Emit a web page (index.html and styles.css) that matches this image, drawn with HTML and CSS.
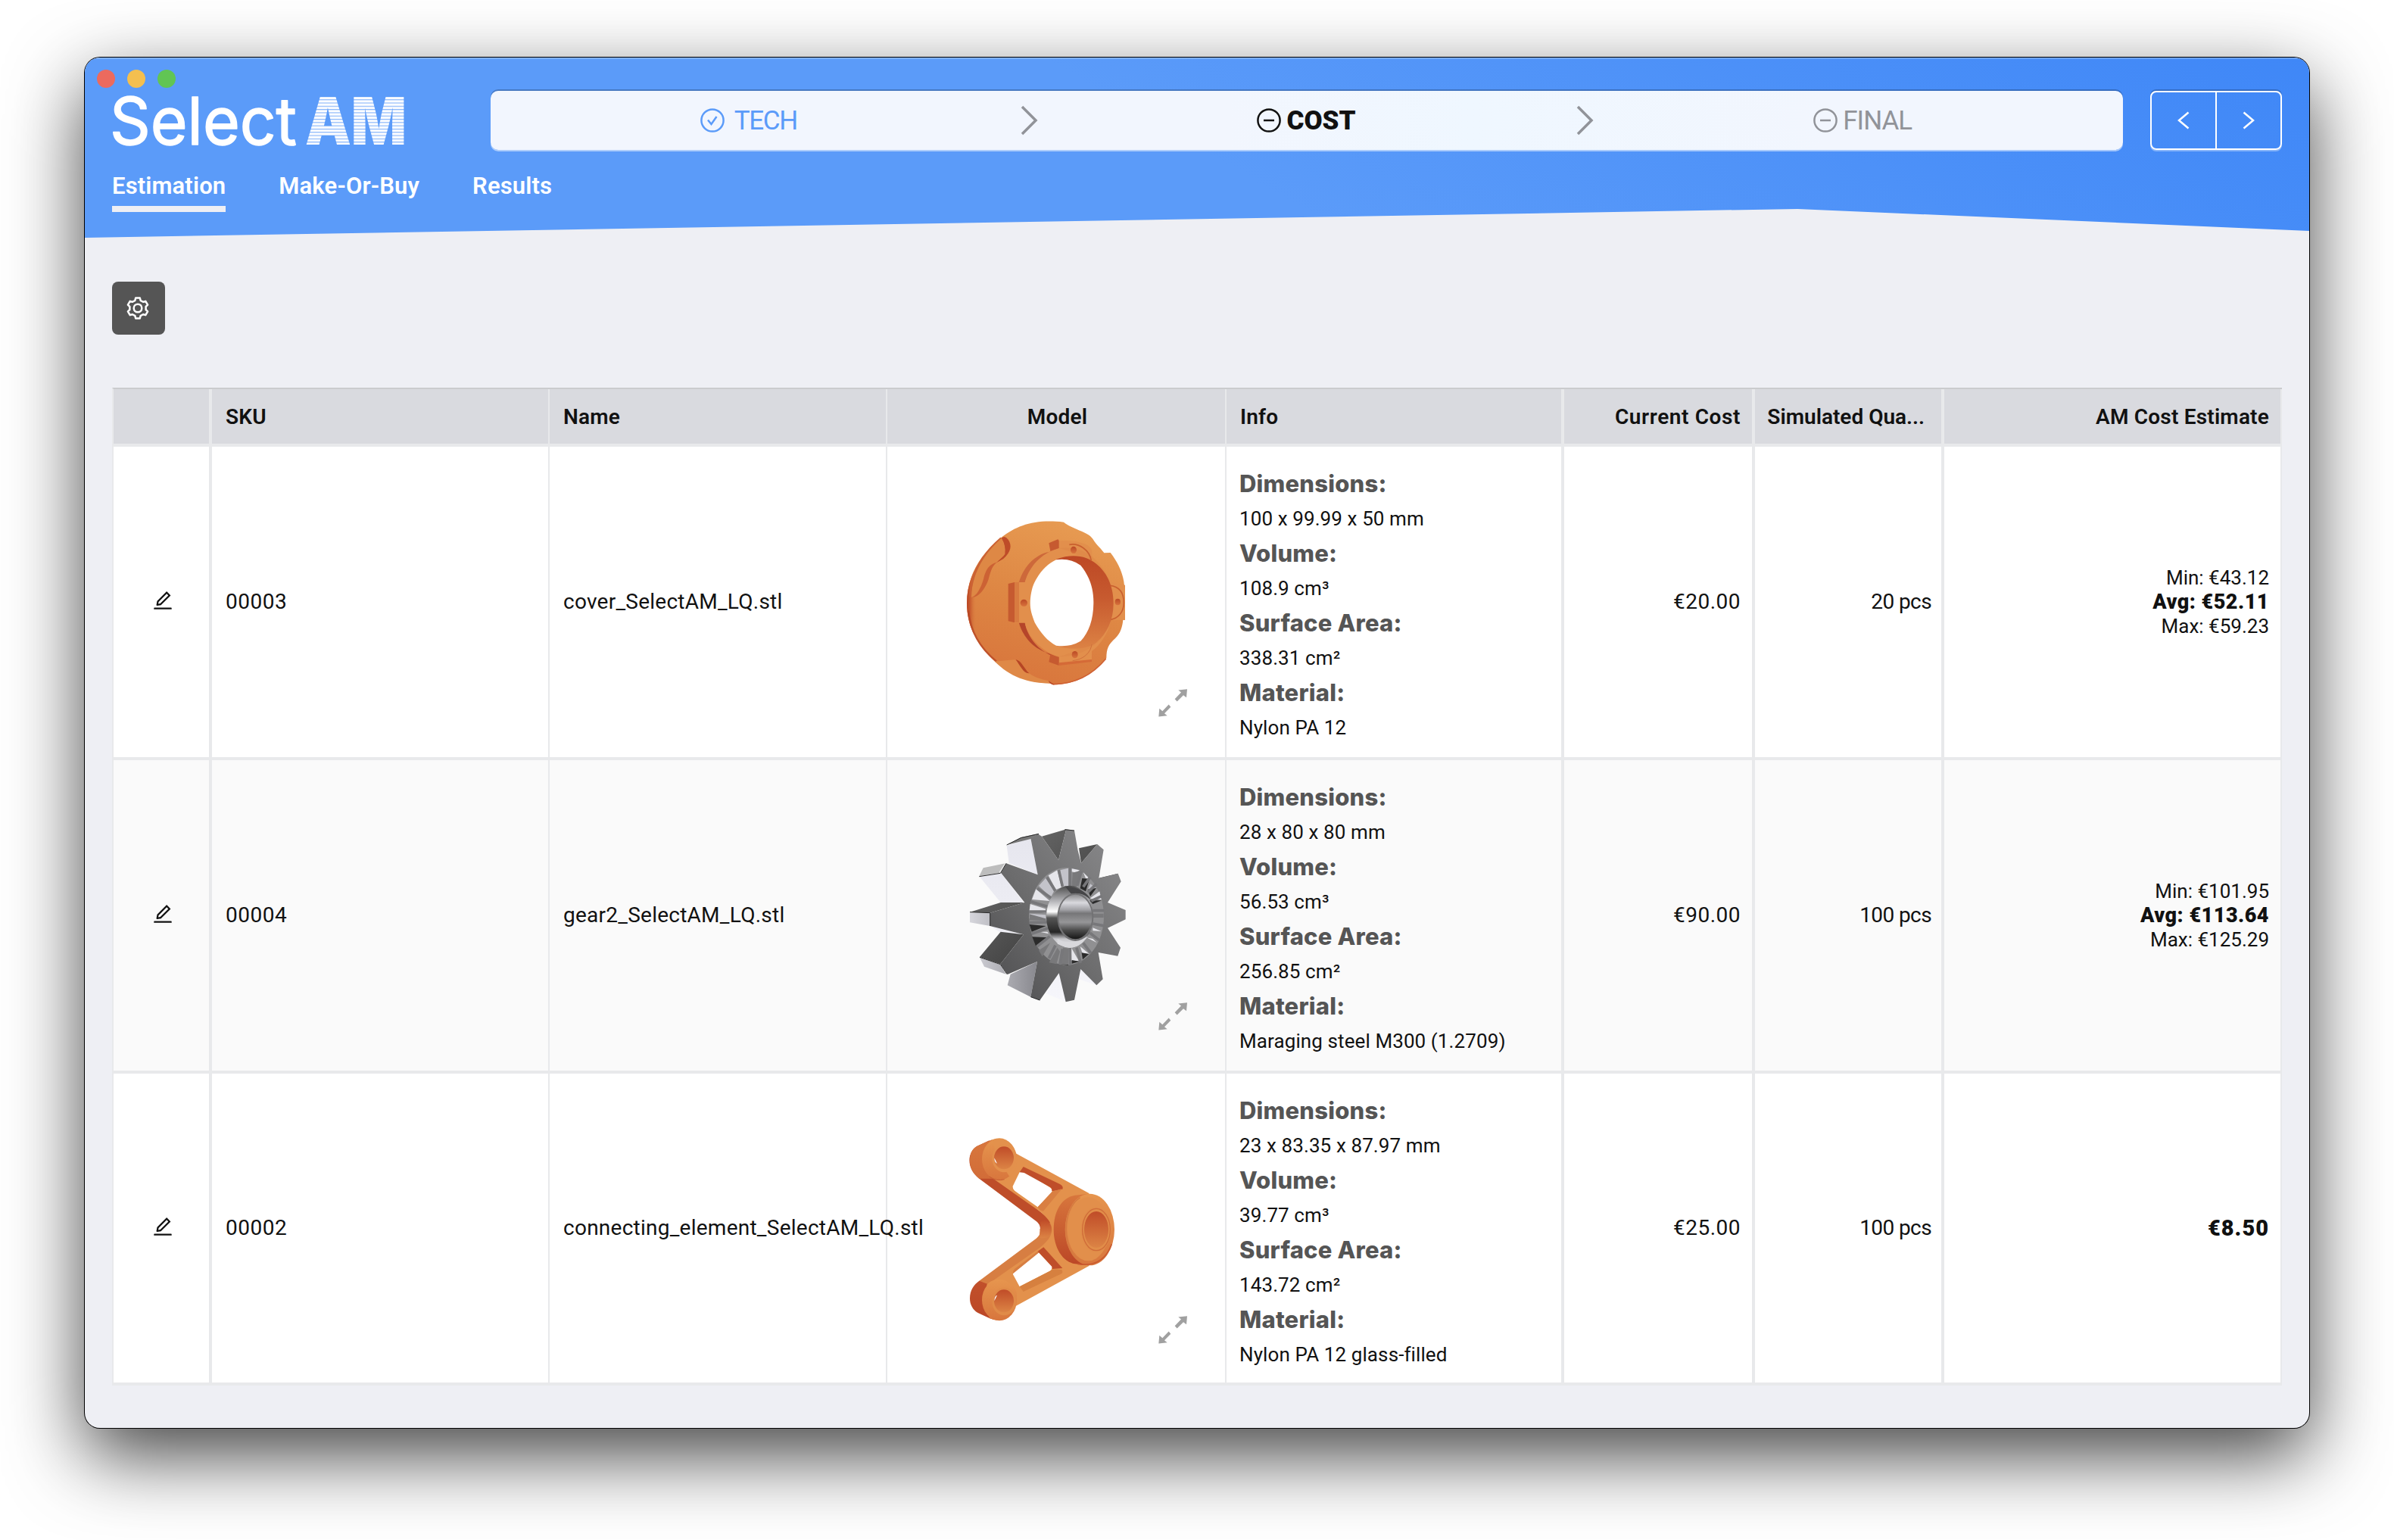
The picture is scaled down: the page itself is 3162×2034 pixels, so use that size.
FILE: index.html
```html
<!DOCTYPE html>
<html lang="en">
<head>
<meta charset="utf-8">
<title>Select AM</title>
<link rel="stylesheet" href="styles.css">
</head>
<body>
<svg class="defs" width="0" height="0" aria-hidden="true">
  <defs>
    <symbol id="edit" viewBox="0 0 1024 1024"><path d="M257.700 752c2 0 4-.2 6-.5L431.900 722c2-.4 3.900-1.300 5.300-2.800l423.900-423.900a9.960 9.960 0 0 0 0-14.100L694.900 114.900c-1.900-1.900-4.400-2.900-7.100-2.900s-5.200 1-7.100 2.900L256.800 538.800c-1.500 1.500-2.400 3.300-2.800 5.300l-29.500 168.200a33.500 33.500 0 0 0 9.400 29.800c6.600 6.400 14.900 9.900 23.800 9.900zm67.400-174.400L687.800 215l73.300 73.300-362.700 362.600-88.900 15.700 15.600-89zM880 836H144c-17.700 0-32 14.300-32 32v36c0 4.400 3.600 8 8 8h784c4.400 0 8-3.600 8-8v-36c0-17.700-14.300-32-32-32z"/></symbol>
    <symbol id="expand" viewBox="0 0 114 110"><path d="M114 0L79 4l11 9-25 26 9 10 25-25 12 9zM1 109l3-32 12 10 25-26 8 10-25 25 11 9z"/></symbol>
    <symbol id="minus" viewBox="0 0 32 32"><circle cx="16" cy="16" r="14.600"/><path d="M9 16h14"/></symbol>
  </defs>
</svg>

<div class="window">
  <header class="header">
    <div class="lights"><i class="red"></i><i class="yellow"></i><i class="green"></i></div>
    <div class="topbar">
      <svg class="logo" width="500" height="78" viewBox="0 0 500 78">
        <defs>
          <pattern id="stripes" width="10" height="4.300" patternUnits="userSpaceOnUse"><rect width="10" height="4.300" fill="#fff"/><rect width="10" height="1.300" y="2.500" fill="#8fbafb"/></pattern>
        </defs>
        <text class="logo-select" x="-3" y="70.500" textLength="247" lengthAdjust="spacingAndGlyphs">Select</text>
        <text class="logo-am" x="255" y="70.500" textLength="134" lengthAdjust="spacingAndGlyphs" fill="url(#stripes)">AM</text>
      </svg>
      <nav class="steps">
        <div class="step done"><svg class="step-icon" viewBox="0 0 32 32"><circle cx="16" cy="16" r="14.600"/><path d="M10 15.500l4.500 5.500L21.500 11"/></svg><span>TECH</span></div>
        <svg class="sep" viewBox="0 0 24 40"><path d="M2 2l18 18L2 38"/></svg>
        <div class="step active-step"><svg class="step-icon"><use href="#minus"/></svg><span>COST</span></div>
        <svg class="sep" viewBox="0 0 24 40"><path d="M2 2l18 18L2 38"/></svg>
        <div class="step next"><svg class="step-icon"><use href="#minus"/></svg><span>FINAL</span></div>
      </nav>
      <div class="pager">
        <button><svg viewBox="0 0 16 24"><path d="M14.500 1.500L2 12l12.500 10.500"/></svg></button>
        <button><svg viewBox="0 0 16 24"><path d="M1.500 1.500L14 12 1.500 22.500"/></svg></button>
      </div>
    </div>
    <nav class="tabs"><a class="active">Estimation</a><a>Make-Or-Buy</a><a>Results</a></nav>
  </header>

  <main class="content">
    <button class="settings"><svg viewBox="-16 -16 32 32"><path d="M-3.600-10.200L-2.800-13.500H2.800L3.600-10.200 7.030-8.220 10.290-9.170 13.090-4.330 10.630-1.980V1.980L13.090 4.330 10.290 9.170 7.030 8.220 3.600 10.200 2.800 13.500H-2.800L-3.600 10.200-7.030 8.220-10.290 9.170-13.090 4.330-10.630 1.980V-1.980L-13.090-4.330-10.290-9.170-7.030-8.220z"/><circle r="5.300"/></svg></button>

    <div class="table">
      <div class="row head">
        <div></div><div>SKU</div><div>Name</div><div class="center">Model</div><div>Info</div><div class="num wide">Current Cost</div><div class="num clipped">Simulated Qua...</div><div class="num">AM Cost Estimate</div>
      </div>

      <div class="row">
        <div class="center"><svg class="edit"><use href="#edit"/></svg></div>
        <div>00003</div>
        <div class="name">cover_SelectAM_LQ.stl</div>
        <div class="model">
          <svg class="part" viewBox="-204 -210 1338 1230">
            <defs>
              <linearGradient id="cBody" x1=".65" y1="0" x2=".35" y2="1"><stop offset="0" stop-color="#e79b52"/><stop offset=".5" stop-color="#de8744"/><stop offset="1" stop-color="#d8753c"/></linearGradient>
              <linearGradient id="cEdge" x1="0" y1="0" x2="1" y2="0"><stop offset="0" stop-color="#b94422"/><stop offset=".07" stop-color="#cb6032"/><stop offset=".16" stop-color="#d87a3e" stop-opacity="0"/></linearGradient>
              <linearGradient id="cBore" x1="0" y1="0" x2="0" y2="1"><stop offset="0" stop-color="#bd4825"/><stop offset=".45" stop-color="#c75a2f"/><stop offset="1" stop-color="#dc8244"/></linearGradient>
              <linearGradient id="cHole" x1="0" y1="0" x2="0" y2="1"><stop offset="0" stop-color="#bb4a26"/><stop offset="1" stop-color="#d8733c"/></linearGradient>
            </defs>
            <path fill="url(#cBody)" d="M111 410C111 320 150 225 250 148C310 102 380 76 495 89C530 118 590 125 610 155C625 180 645 195 655 211L680 210C715 255 732 300 735 340H738V476H730C728 500 720 530 700 548C670 575 665 590 664 627C610 695 540 733 453 733L434 726C350 726 280 690 222 641C150 575 111 500 111 410z"/>
            <path fill="url(#cEdge)" d="M111 410C111 320 150 225 250 148C330 200 190 560 330 640C270 640 240 635 222 641C150 575 111 500 111 410z"/>
            <path fill="none" stroke="#b64424" stroke-width="7" opacity=".75" d="M117 440C125 520 165 590 228 640"/>
            <path fill="none" stroke="#cf6134" stroke-width="5" d="M662 630C610 693 540 730 453 731"/>
            <path fill="#be4c28" d="M248 152Q262 140 275 158C290 180 288 205 255 235L228 250 262 215Q266 180 248 152z"/>
            <path fill="#de8845" d="M129 387C128 310 170 220 248 153Q264 185 260 218C235 250 200 250 188 290C175 330 150 385 129 387z"/>
            <path fill="#cc6234" d="M129 387C150 383 166 350 176 318C188 270 200 258 232 247C212 260 205 285 196 318C184 350 160 388 129 387z"/>
            <path fill="#cb6234" d="M129 387C128 310 170 220 248 153L244 149C150 230 115 320 122 388z"/>
            <path fill="#df8947" d="M222 641L304 633C325 650 345 690 358 688C380 705 410 712 434 718L440 728C350 726 280 700 222 641z"/>
            <path fill="#b64524" d="M304 633C328 637 338 670 358 688C335 690 322 655 304 633zM434 717L458 733H450L439 725z"/>
            <path fill="#cd683a" d="M317 328C340 255 390 215 437 207L476 188V200C410 220 360 260 341 328z"/>
            <path fill="#b5452a" d="M317 486C335 550 380 592 437 610L476 627C400 610 350 545 341 486z"/>
            <path fill="#e28f4c" d="M472 162C550 160 600 175 606 200L608 243 690 330 738 338V476H682C672 530 640 575 606 600V640L476 654V622C410 605 350 540 341 488H298V327H341C360 260 410 210 476 192z"/>
            <path fill="#c65a30" d="M436 172L472 157 476 162V191L442 204zM275 333L300 327V487L275 481zM442 613L476 624V657L436 643z"/>
            <path fill="#d87b40" d="M300 327H318V487H300z"/>
            <path fill="#d56a37" d="M476 646L606 633V642L476 657z"/>
            <path fill="#d87a40" opacity=".25" d="M476 192C600 175 690 280 690 410S600 620 476 622C600 590 665 500 665 410S600 220 476 192z"/>
            <path fill="url(#cBore)" d="M465 236C530 212 585 222 625 255C668 290 692 345 692 410C692 480 665 530 625 565C585 598 510 595 465 579z"/>
            <path fill="#fff" d="M465 238Q520 230 562 260C595 300 614 350 613 410C612 475 595 525 562 560Q520 585 465 578C430 560 405 530 380 487C368 455 362 435 362 410S368 350 378 330C400 285 430 255 465 238z"/>
            <path fill="none" stroke="#c9602f" stroke-width="5" d="M517 178C555 170 598 200 604 242M680 340C715 345 733 370 733 408S710 470 682 475"/>
            <path fill="none" stroke="#d0713c" stroke-width="3" d="M606 573C602 605 575 633 530 638"/>
            <g fill="url(#cHole)"><circle cx="337" cy="409" r="14"/><ellipse cx="534" cy="199" rx="12" ry="14"/><ellipse cx="539" cy="614" rx="12" ry="14"/><ellipse cx="709" cy="405" rx="11" ry="13"/></g>
          </svg>
          <svg class="expand"><use href="#expand"/></svg>
        </div>
        <div class="info"><b>Dimensions:</b><span>100 x 99.99 x 50 mm</span><b>Volume:</b><span>108.9 cm³</span><b>Surface Area:</b><span>338.31 cm²</span><b>Material:</b><span>Nylon PA 12</span></div>
        <div class="num">€20.00</div>
        <div class="num qty">20 pcs</div>
        <div class="num estimate"><span>Min: €43.12</span><b>Avg: €52.11</b><span>Max: €59.23</span></div>
      </div>

      <div class="row alt">
        <div class="center"><svg class="edit"><use href="#edit"/></svg></div>
        <div>00004</div>
        <div class="name">gear2_SelectAM_LQ.stl</div>
        <div class="model">
          <svg class="part" viewBox="-204 -168 1338 1230">
            <defs>
              <linearGradient id="gFace" x1="0" y1="1" x2="1" y2="0"><stop offset="0" stop-color="#4c4c4e"/><stop offset=".45" stop-color="#6c6c6d"/><stop offset="1" stop-color="#8c8c8e"/></linearGradient>
              <linearGradient id="gLight" x1="0" y1="0" x2="0" y2="1"><stop offset="0" stop-color="#e6e6ee"/><stop offset="1" stop-color="#f6f6fb"/></linearGradient>
              <linearGradient id="gDark" x1="0" y1="0" x2="1" y2="1"><stop offset="0" stop-color="#777"/><stop offset="1" stop-color="#2a2a2a"/></linearGradient>
              <linearGradient id="gMid" x1="0" y1="0" x2="1" y2="0"><stop offset="0" stop-color="#d6d6dc"/><stop offset="1" stop-color="#88888e"/></linearGradient>
              <linearGradient id="gBore" x1="0" y1="0" x2="0" y2="1"><stop offset="0" stop-color="#8b8b8d"/><stop offset=".18" stop-color="#d9d9de"/><stop offset=".34" stop-color="#a2a2a6"/><stop offset=".42" stop-color="#767678"/><stop offset=".62" stop-color="#969698"/><stop offset=".8" stop-color="#4c4c4c"/><stop offset="1" stop-color="#161616"/></linearGradient>
              <linearGradient id="gRing" x1="0" y1="0" x2="0" y2="1"><stop offset="0" stop-color="#4b4b4b"/><stop offset=".25" stop-color="#b5b5b9"/><stop offset=".42" stop-color="#fff"/><stop offset=".52" stop-color="#555"/><stop offset=".75" stop-color="#262626"/><stop offset=".86" stop-color="#c8c8cc"/><stop offset="1" stop-color="#e9e9ed"/></linearGradient>
            </defs>
            <path fill="url(#gLight)" d="M269 170L364 142 392 286 278 240zM160 292L246 278 336 396H245zM560 660L650 700 625 724 556 700zM424 756L476 676 503 790zM204 490L330 521 240 512z"/>
            <path fill="#777" d="M269 168L325 138 392 124 364 144z"/>
            <path fill="#bdbdbd" d="M160 292L176 259 264 241 240 279z"/>
            <path fill="url(#gDark)" d="M408 134L505 106 474 228zM555 181L628 165 564 240zM634 299L710 281 660 320zM123 434L245 396 340 396 203 437zM162 612L245 512 336 523 244 640z"/>
            <path fill="url(#gMid)" d="M123 436L203 437V489L123 475zM162 614L244 642 266 680 180 650zM272 724L284 680 390 630 364 770z"/>
            <path fill="url(#gFace)" d="M392 124L408 134 474 228 505 106 537 111 551 190 564 240 628 165 653 187 634 300 710 281 722 313 669 396 740 426V463L669 497 720 575 709 608 632 594 650 700 625 724 562 660 537 782 503 790 476 676 400 784 364 770 390 630 272 681 244 640 336 523 203 489V437L340 396 246 278 267 241 392 286 364 142z"/>
            <path fill="none" stroke="#2b2b2b" stroke-width="3" d="M269 168L325 140 396 124M160 293L244 280 267 241M123 434L203 437V489M162 613L244 641 270 680M499 107L537 111M364 770L400 783"/>
            <path fill="none" stroke="#eee" stroke-width="3" d="M240 276L262 242"/>
            <ellipse cx="506" cy="451" rx="148" ry="193" fill="#909092"/>
            <g fill="#e6e6eb"><path d="M434 289L469 268 486 336 464 345zM527 262L558 268 545 278 527 274zM385 343L369 384 440 390zM362 402L359 428 424 438 422 421zM598 380L644 385 637 352zM572 276L595 300 582 300zM525 575L555 628 526 627zM560 570L596 600 569 597zM400 512L435 520 430 512zM610 540L626 555 585 535zM610 496L644 510 610 508z"/></g>
            <g fill="#c3c3ca"><path d="M396 330L425 298 456 352 444 375zM600 322L622 338 590 345zM480 268L513 260V330L492 332zM359 440L424 445V465L359 460z"/></g>
            <g fill="#2b2b2b"><path d="M568 300L597 303 582 352 560 340zM590 344L624 339 600 372zM598 388L645 388 610 402zM359 483L425 489 368 512zM370 532L436 535 384 568zM566 595L595 600 570 622zM527 624L558 630 527 638zM482 640H513V645z"/></g>
            <g fill="#79797b"><path d="M359 442L424 460V468L359 466zM396 586L442 555 410 610zM610 440H653V456H610zM437 634L470 575 480 590 466 640zM482 640L492 575 515 578 513 643zM527 330L530 278 560 270 545 340z"/></g>
            <g stroke="#77777a" stroke-width="11" fill="none"><path d="M520 259V330M475 267L490 332M428 296L462 350M390 340L445 378M365 393L430 412M358 432H428M359 476L428 474M368 520L432 498M389 570L440 530M436 617L462 566M480 640L490 580M520 645V576M562 635L546 575M602 596L572 556M635 545L598 516M652 488L610 480M654 428H610M646 370L604 390M625 322L590 356M600 295L572 334M565 272L548 330"/></g>
            <ellipse cx="518" cy="452" rx="92" ry="123" fill="url(#gRing)"/>
            <path fill="#454547" d="M500 332Q575 335 603 385L590 376Q565 355 525 362z"/>
            <path fill="#d8d8dc" d="M470 540Q520 570 590 530Q560 575 518 575Q490 570 470 560z"/>
            <ellipse cx="541" cy="454" rx="72" ry="95" fill="#727274"/>
            <ellipse cx="541" cy="453" rx="66" ry="88" fill="url(#gBore)"/>
          </svg>
          <svg class="expand"><use href="#expand"/></svg>
        </div>
        <div class="info"><b>Dimensions:</b><span>28 x 80 x 80 mm</span><b>Volume:</b><span>56.53 cm³</span><b>Surface Area:</b><span>256.85 cm²</span><b>Material:</b><span>Maraging steel M300 (1.2709)</span></div>
        <div class="num">€90.00</div>
        <div class="num qty">100 pcs</div>
        <div class="num estimate"><span>Min: €101.95</span><b>Avg: €113.64</b><span>Max: €125.29</span></div>
      </div>

      <div class="row last">
        <div class="center"><svg class="edit"><use href="#edit"/></svg></div>
        <div>00002</div>
        <div class="name">connecting_element_SelectAM_LQ.stl</div>
        <div class="model">
          <svg class="part" viewBox="36 54 1338 1224">
            <defs>
              <linearGradient id="eSide" x1="0" y1="0" x2="0" y2="1"><stop offset="0" stop-color="#d8773d"/><stop offset="1" stop-color="#bb4626"/></linearGradient>
              <linearGradient id="eFace" x1="0" y1="0" x2="0" y2="1"><stop offset="0" stop-color="#e6954e"/><stop offset="1" stop-color="#d8763d"/></linearGradient>
              <linearGradient id="eBore" x1="0" y1="0" x2="0" y2="1"><stop offset="0" stop-color="#c04c28"/><stop offset="1" stop-color="#dc8445"/></linearGradient>
            </defs>
            <path fill="#be4d29" d="M400 470C350 430 350 370 390 342L440 319 480 470 690 640 640 690C645 660 640 650 625 638z"/>
            <path fill="#d77e42" d="M400 875L625 708C640 695 642 690 640 670L690 640 690 720 480 890 420 930z"/>
            <path fill="url(#eSide)" d="M363 400C363 365 375 350 395 340L450 316 470 470 400 470C375 450 363 430 363 400zM363 945C363 910 380 890 400 875L440 890 460 1030 440 1023 395 1002C375 990 363 970 363 945z"/>
            <path fill="#e3914c" fill-rule="evenodd" d="M448 465L520 400 545 370 835 528 835 816 545 975 480 930 448 879 640 744C670 719 688 699 688 672C688 645 670 625 640 600zM560 445L533 500Q532 510 540 518L632 583 688 525Q692 512 680 505L578 440zM632 758L540 828Q532 838 534 850L560 898 680 836Q690 830 688 818z"/>
            <path fill="url(#eBore)" d="M642 642C665 620 688 650 687 672C687 695 665 712 640 704C640 680 645 660 642 642z"/>
            <path fill="#bf4e2a" d="M560 445L575 423 720 492Q735 500 730 512L688 520Q690 508 680 503L578 447z"/>
            <path fill="#d97f42" d="M632 583L688 522 728 510 655 598Q640 600 632 583z"/>
            <path fill="#bf4e2a" d="M632 758L655 742 730 825 690 828 688 818z"/>
            <path fill="#d6803f" d="M560 898L680 836Q692 825 728 832Q735 845 720 850L575 918z"/>
            <ellipse cx="480" cy="393" rx="69" ry="83" fill="url(#eFace)"/>
            <path fill="#e3914c" d="M450 316C500 300 535 335 545 368C555 400 550 440 520 462L480 400z"/>
            <ellipse cx="480" cy="951" rx="69" ry="82" fill="url(#eFace)"/>
            <path fill="url(#eFace)" d="M430 890C470 850 535 880 548 920C552 960 540 985 520 1010C500 1035 470 1035 440 1023z"/>
            <path fill="none" stroke="#c75b31" stroke-width="3" d="M440 462Q470 482 500 473"/>
            <ellipse cx="499" cy="390" rx="48" ry="55" fill="#e3904c"/>
            <ellipse cx="498" cy="388" rx="39" ry="45" fill="url(#eBore)"/>
            <ellipse cx="499" cy="957" rx="48" ry="55" fill="#e08b48"/>
            <ellipse cx="498" cy="955" rx="39" ry="45" fill="url(#eBore)"/>
            <path fill="#fff" d="M460 388L471 410Q460 408 460 388zM460 955L471 932Q460 935 460 955z"/>
            <path fill="url(#eSide)" d="M835 530L780 536C725 545 695 600 695 672S730 800 780 808L835 814z"/>
            <ellipse cx="838" cy="672" rx="98" ry="142" fill="url(#eFace)"/>
            <path fill="none" stroke="#c9592f" stroke-width="5" d="M790 808Q890 825 925 730"/>
            <ellipse cx="832" cy="670" rx="83" ry="126" fill="#e28f4b"/>
            <path fill="none" stroke="#d57b41" stroke-width="5" d="M800 545C725 590 725 760 805 796"/>
            <ellipse cx="863" cy="672" rx="60" ry="89" fill="#e18d49"/>
            <ellipse cx="864" cy="672" rx="55" ry="83" fill="none" stroke="#d06c39" stroke-width="4"/>
            <ellipse cx="864" cy="672" rx="48" ry="72" fill="url(#eBore)"/>
          </svg>
          <svg class="expand"><use href="#expand"/></svg>
        </div>
        <div class="info"><b>Dimensions:</b><span>23 x 83.35 x 87.97 mm</span><b>Volume:</b><span>39.77 cm³</span><b>Surface Area:</b><span>143.72 cm²</span><b>Material:</b><span>Nylon PA 12 glass-filled</span></div>
        <div class="num">€25.00</div>
        <div class="num qty">100 pcs</div>
        <div class="num estimate"><b class="single">€8.50</b></div>
      </div>
    </div>
  </main>
</div>
</body>
</html>
```
FILE: styles.css
```css
* { box-sizing: border-box; }
body { margin: 0; height: 2034px; padding: 76px 112px 0; overflow: hidden; background: #fff; color: #111; font: 400 28px/34px Roboto, "Liberation Sans", sans-serif; }
.defs { position: absolute; }
button { appearance: none; border: 0; padding: 0; background: none; }

.window { width: 2938px; height: 1810px; border-radius: 20px; background: #eeeff4; box-shadow: 0 0 0 1px #000, 0 36px 100px rgba(0, 0, 0, .74); overflow: hidden; }

.header { position: relative; height: 238px; padding: 44px 36px 0; color: #fff; background: linear-gradient(30deg, #5b9bf9 50%, #3f87f7 100%); box-shadow: inset 0 2px rgba(255, 255, 255, .22); clip-path: polygon(0 0, 100% 0, 100% 96.200%, 77% 84%, 0 100%); }
.lights { position: absolute; left: 16px; top: 16px; display: flex; gap: 16px; }
.lights i { width: 24px; height: 24px; border-radius: 50%; }
.red { background: #ec6a5e; }
.yellow { background: #f4bf4f; }
.green { background: #61c554; }

.topbar { display: flex; height: 78px; }
.logo { flex: none; overflow: visible; }
.logo-select { font: 400 86px Inter, sans-serif; fill: #fff; stroke: #fff; stroke-width: 1.500px; stroke-linejoin: round; }
.logo-am { font: 900 87px Inter, sans-serif; }

.steps { display: flex; align-items: center; width: 2156px; height: 78px; border-radius: 10px; background: linear-gradient(90deg, #f2f6fe 45%, #eff7ff 60%, #f2f6fe 82%); box-shadow: 0 -2px rgba(0, 0, 0, .22), 0 2px rgba(255, 255, 255, .5); }
.step { flex: 1; display: flex; align-items: center; justify-content: center; gap: 7px; padding-right: 3px; font-size: 35px; line-height: 40px; font-weight: 370; }
.step span { padding-top: 2px; }
.step-icon { width: 32px; height: 32px; fill: none; stroke: currentColor; stroke-width: 2.500px; }
.done { color: #5b9bf9; gap: 13px; letter-spacing: -1.400px; }
.active-step { padding-right: 1px; color: #111; font-weight: 900; letter-spacing: 0; }
.next { color: #919399; letter-spacing: -1px; }
.sep { width: 24px; height: 40px; margin: 0 13px 0 15px; fill: none; stroke: #919399; stroke-width: 3.500px; }

.pager { display: flex; width: 174px; height: 78px; margin-left: 36px; border: 2px solid #fff; border-radius: 8px; box-shadow: 0 -2px rgba(0, 0, 0, .2), 0 2px rgba(255, 255, 255, .35); }
.pager button { flex: 1; display: grid; place-items: center; }
.pager button + button { border-left: 2px solid #fff; }
.pager svg { width: 16px; height: 24px; fill: none; stroke: #fff; stroke-width: 2.500px; }

.tabs { display: flex; gap: 70px; margin-top: 12px; font-size: 31px; font-weight: 600; letter-spacing: .15px; }
.tabs a { padding-top: 10px; line-height: 52px; border-bottom: 8px solid transparent; }
.tabs .active { border-color: #eeeff4; }

.content { padding: 58px 36px 0; }
.settings { display: grid; place-items: center; width: 70px; height: 70px; margin-bottom: 70px; border-radius: 8px; background: #555; }
.settings svg { width: 32px; height: 32px; margin-right: 2px; fill: none; stroke: #fff; stroke-width: 2.500px; stroke-linejoin: round; }

.table { width: 2866px; border-top: 2px solid #cacbcd; border-left: 2px solid #e8e9eb; }
.row { display: grid; grid-template-columns: 130px 446px 446px 448px 446px 252px 250px 446px; height: 414px; background: #fff; border-bottom: 4px solid #e8e9eb; }
.row.alt { background: #fafafa; }
.row.last { height: 412px; }
.row.head { height: 76px; background: #d9dadf; font-weight: 600; }
.row > div { display: flex; align-items: center; padding: 0 15px 0 18px; border-right: 2px solid #e8e9eb; white-space: nowrap; letter-spacing: .5px; }
.row.head > div { padding-top: 2px; letter-spacing: .2px; }
.row.head > .wide { letter-spacing: .6px; }
.row.head > .clipped { padding-right: 22px; letter-spacing: 0; }
.row > div:nth-child(1), .row > div:nth-child(5), .row > div:nth-child(6), .row > div:nth-child(7) { border-right-width: 4px; }
.row > .center { justify-content: center; }
.row > .num { justify-content: flex-end; padding-left: 0; }
.row > .qty { padding-right: 13px; letter-spacing: -.600px; }
.row > .name { position: relative; z-index: 1; letter-spacing: .25px; }
.row > .model { position: relative; padding: 0; }
.edit { width: 30px; height: 30px; margin-top: -4px; fill: #111; }
.part { width: 446px; height: 100%; }
.expand { position: absolute; right: 50px; bottom: 53px; width: 38px; height: 37px; fill: #a0a0a0; }
.last .expand { bottom: 51px; }

.row > .info { flex-direction: column; align-items: flex-start; justify-content: flex-start; padding: 26px 0 0 17px; letter-spacing: .1px; font-size: 26px; line-height: 46px; }
.info b { font: 800 31px/46px Inter, sans-serif; letter-spacing: .2px; color: #555; }
.row > .estimate { flex-direction: column; align-items: flex-end; justify-content: center; font-size: 26px; line-height: 32px; letter-spacing: 0; }
.estimate b { font-size: 27px; font-weight: 900; letter-spacing: .5px; }
.estimate .single { font-size: 29px; letter-spacing: 1px; }
```
